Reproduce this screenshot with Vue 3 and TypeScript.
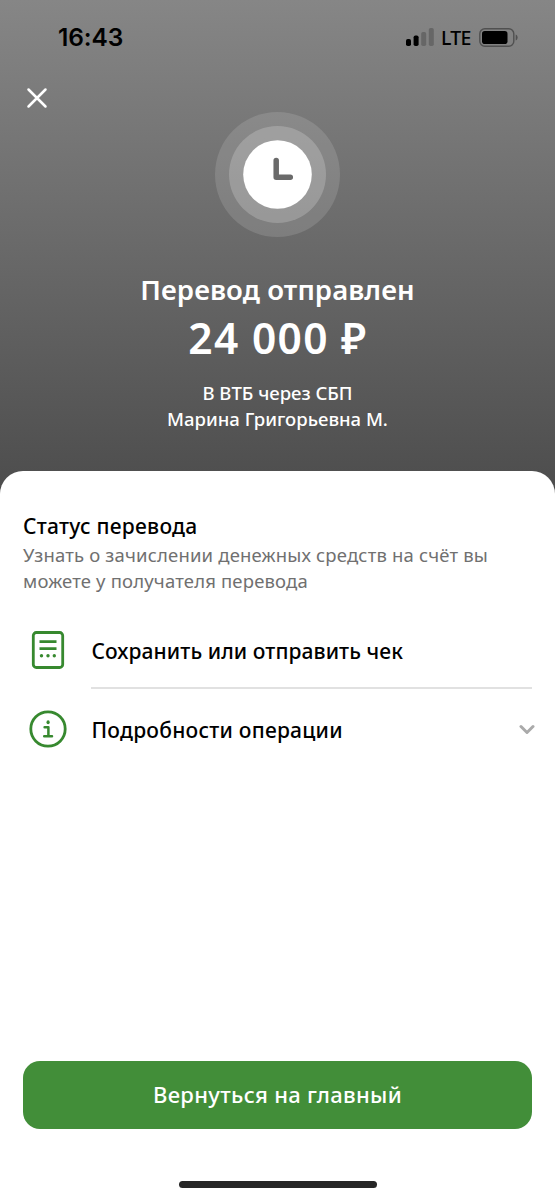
<script setup lang="ts">
const recipient: string[] = ['В ВТБ через СБП', 'Марина Григорьевна М.']
const note: string[] = ['Узнать о зачислении денежных средств на счёт вы', 'можете у получателя перевода']
</script>

<template>
  <main class="screen">
    <header class="hero">
      <div class="statusbar">
        <span class="time">16:43</span>
        <div class="indicators">
          <svg class="signal" width="28" height="18" viewBox="0 0 28 18">
            <rect x="0" y="11" width="5" height="7" rx="1.8" />
            <rect x="7.6" y="7.5" width="5" height="10.5" rx="1.8" />
            <rect class="dim" x="15.2" y="4" width="5" height="14" rx="1.8" />
            <rect class="dim" x="22.8" y="0" width="5" height="18" rx="1.8" />
          </svg>
          <span class="network">LTE</span>
          <svg class="battery" width="39" height="19" viewBox="0 0 39 19">
            <rect class="shell" x="0.8" y="0.8" width="34" height="17.4" rx="5" />
            <rect x="3" y="3" width="25.5" height="13" rx="2.8" />
            <path class="tip" d="M36.7 6.5c2.6 1.3 2.6 4.7 0 6z" />
          </svg>
        </div>
      </div>
      <button class="close" type="button" aria-label="Закрыть">
        <svg width="24" height="24" viewBox="0 0 24 24">
          <path d="M3.5 3.5L20.5 20.5M20.5 3.5L3.5 20.5" />
        </svg>
      </button>
      <svg class="clock" width="125" height="125" viewBox="0 0 125 125">
        <circle class="halo" cx="62.5" cy="62.5" r="62.5" />
        <circle class="ring" cx="62.5" cy="62.5" r="48.5" />
        <circle class="face" cx="62.5" cy="62.5" r="34.3" />
        <path d="M61.2 48.5V65.3H75.3" />
      </svg>
      <h1 class="title">Перевод отправлен</h1>
      <p class="amount">24 000 ₽</p>
      <p class="recipient">
        <span v-for="line in recipient" :key="line">{{ line }}</span>
      </p>
    </header>

    <section class="sheet">
      <h2 class="heading">Статус перевода</h2>
      <p class="note">
        <span v-for="line in note" :key="line">{{ line }}</span>
      </p>
      <div class="row receipt">
        <svg class="icon" width="38" height="38" viewBox="0 0 38 38">
          <rect x="4.3" y="1.5" width="29.4" height="35" rx="3" />
          <path d="M10.5 10.7H27.5M10.5 17.7H27.5" />
          <g class="dots">
            <circle cx="12.5" cy="24.7" r="1.7" />
            <circle cx="19" cy="24.7" r="1.7" />
            <circle cx="25.3" cy="24.7" r="1.7" />
          </g>
        </svg>
        <span class="label save">Сохранить или отправить чек</span>
      </div>
      <div class="divider"></div>
      <div class="row more">
        <svg class="icon" width="38" height="38" viewBox="0 0 38 38">
          <circle cx="19" cy="19" r="17.2" />
          <path class="letter" d="M15.6 17.3H19.4V26.3M15.2 26.3H23" />
          <g class="dots"><ellipse cx="19.1" cy="12.3" rx="1.6" ry="2" /></g>
        </svg>
        <span class="label details">Подробности операции</span>
        <svg class="chevron" width="16" height="12" viewBox="0 0 16 12">
          <path d="M2 3.5L8 9.5L14 3.5" />
        </svg>
      </div>
      <button class="home" type="button">Вернуться на главный</button>
      <div class="indicator"></div>
    </section>
  </main>
</template>

<style>
body {
  margin: 0;
}
</style>

<style scoped>
.screen {
  width: 555px;
  height: 1200px;
  display: flex;
  flex-direction: column;
  overflow: hidden;
  background: linear-gradient(#868686 0, #4d4d4d 490px);
  font-family: "Noto Sans", "Open Sans", sans-serif;
  font-weight: 500;
  white-space: nowrap;
}
h1, h2, p {
  margin: 0;
}
button {
  border: 0;
  padding: 0;
  font: inherit;
}
svg {
  display: block;
  flex: none;
}
.hero {
  height: 471px;
  flex: none;
  display: flex;
  flex-direction: column;
  align-items: center;
  color: #fff;
}
.statusbar {
  box-sizing: border-box;
  width: 100%;
  height: 74px;
  padding: 0 37px 0 58px;
  display: flex;
  align-items: center;
  justify-content: space-between;
  color: #000;
}
.time {
  font-family: Inter, sans-serif;
  font-size: 24.5px;
  letter-spacing: -0.1px;
  font-weight: 600;
}
.indicators {
  display: flex;
  align-items: center;
}
.dim {
  fill: #666;
}
.network {
  width: 38px;
  margin-left: 7px;
  font-size: 19.5px;
  letter-spacing: -0.8px;
}
.shell {
  fill: none;
  stroke: #505050;
  stroke-width: 1.4;
}
.tip {
  fill: #505050;
}
.close {
  align-self: flex-start;
  margin: 12px 0 0 25px;
  background: none;
}
.close path {
  fill: none;
  stroke: #fff;
  stroke-width: 2.5;
  stroke-linecap: round;
}
.clock {
  margin-top: 2px;
}
.halo {
  fill: #fff;
  fill-opacity: 0.13;
}
.ring {
  fill: #fff;
  fill-opacity: 0.2;
}
.face {
  fill: #fff;
}
.clock path {
  fill: none;
  stroke: #6a6a6a;
  stroke-width: 5.5;
  stroke-linecap: round;
  stroke-linejoin: round;
}
.title {
  margin-top: 33px;
  font-size: 27.5px;
  line-height: 40px;
  font-weight: 600;
  letter-spacing: 0.08px;
}
.amount {
  margin-top: 3px;
  font-size: 42.5px;
  line-height: 50px;
  font-weight: 600;
  letter-spacing: 1.3px;
  text-indent: 1px;
}
.recipient {
  margin-top: 17px;
  font-size: 18.5px;
  line-height: 25.5px;
  text-align: center;
}
.recipient span,
.note span {
  display: block;
}
.sheet {
  box-sizing: border-box;
  height: 729px;
  padding: 39px 23px 0;
  display: flex;
  flex-direction: column;
  border-radius: 23px 23px 0 0;
  background: #fff;
}
.heading {
  font-size: 21px;
  line-height: 32px;
  font-weight: 500;
  letter-spacing: 0.27px;
}
.note {
  font-size: 18.5px;
  line-height: 26px;
  font-weight: 400;
  letter-spacing: 0.17px;
  color: #707070;
}
.row {
  display: flex;
  align-items: center;
}
.receipt {
  height: 75px;
  margin-top: 18px;
}
.more {
  height: 80px;
}
.icon {
  margin: 0 24.5px 0 6px;
  fill: none;
  stroke: #37892f;
  stroke-width: 2.8;
}
.letter {
  stroke-width: 2.5;
  stroke-linecap: round;
  stroke-linejoin: round;
}
.dots {
  fill: #37892f;
  stroke: none;
}
.label {
  padding-top: 2px;
  font-size: 21px;
  line-height: 32px;
}
.save {
  letter-spacing: 0.08px;
}
.details {
  letter-spacing: 0.24px;
}
.divider {
  height: 2px;
  flex: none;
  margin-left: 68px;
  background: #e1e1e1;
}
.chevron {
  margin: 0 -3px 0 auto;
  fill: none;
  stroke: #aaa;
  stroke-width: 3;
  stroke-linecap: round;
  stroke-linejoin: round;
}
.home {
  box-sizing: border-box;
  margin-top: auto;
  height: 68px;
  padding-bottom: 2px;
  flex: none;
  border-radius: 17px;
  background: #428e39;
  color: #fff;
  font-size: 22px;
  letter-spacing: 0.33px;
}
.indicator {
  width: 198px;
  height: 7px;
  flex: none;
  align-self: center;
  margin: 52px 0 12px;
  border-radius: 4px;
  background: #262626;
}
</style>
